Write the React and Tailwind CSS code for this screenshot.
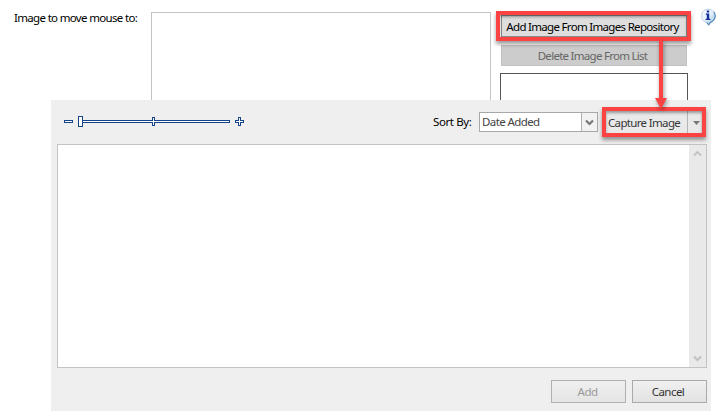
import React from 'react';

function InfoIcon() {
  return (
    <svg width="18" height="20" viewBox="0 0 18 20" className="block">
      <defs>
        <linearGradient id="bubble" x1="0" y1="0" x2="1" y2="1">
          <stop offset="0" stopColor="#ffffff" />
          <stop offset="0.5" stopColor="#e3f0fa" />
          <stop offset="1" stopColor="#8fbce0" />
        </linearGradient>
      </defs>
      <path d="M9 2.2a7 6.8 0 0 1 3.8 12.6l-1.6.7-1.4 2.4-2.2-2.4A7 6.8 0 0 1 9 2.2Z" fill="url(#bubble)" stroke="#b3cbe0" strokeWidth="0.9" />
      <path d="M15 5a7 7 0 0 1-2.2 9.8l-1.6.7-1.4 2.4-2.2-2.4" fill="none" stroke="#4b82b4" strokeWidth="1.1" />
      <path d="M7.8 3.4h2.4v2.2H7.8zM6.8 6.6h3.4v5.2h1.2V13H6.6v-1.2h1.2V7.8h-1z" fill="#16309c" />
    </svg>
  );
}

function ZoomSlider() {
  return (
    <svg width="180" height="12" viewBox="0 0 180 12" shapeRendering="crispEdges" fill="#164488" className="block">
      <path d="M0 4h9v3H0zM18 4h148v3H18zM88 1h3v9h-3zM14 0h5v11h-5zM174 1h3v3h3v3h-3v3h-3V7h-3V4h3z" />
      <path d="M1 5h7v1H1zM19 5h146v1H19zM89 2h1v7h-1zM15 1h3v9h-3zM175 2h1v3h3v1h-3v3h-1V6h-3V5h3z" fill="#ffffff" />
    </svg>
  );
}

function Chevron({ up = false, color, heavy = false }) {
  return (
    <svg width="9" height="7" viewBox="0 0 9 7" className="block">
      <path d={up ? 'M1 5.5 4.5 2 8 5.5' : 'M1 1.5 4.5 5 8 1.5'} fill="none" stroke={color} strokeWidth={heavy ? 2.2 : 1.8} />
    </svg>
  );
}

function Highlight({ className }) {
  return <div className={`pointer-events-none absolute border-4 border-[#fb4343] shadow-[0px_3px_4px_rgba(0,0,0,0.4),inset_0px_2px_3px_rgba(0,0,0,0.35)] ${className}`} />;
}

export default function App() {
  return (
    <div className="relative flex h-[411px] w-[724px] flex-col overflow-hidden bg-white font-['Noto_Sans',sans-serif] text-[11.5px] leading-[16px] whitespace-nowrap text-black">
      <div className="flex h-[100px] shrink-0 overflow-hidden">
        <div className="w-[151px] shrink-0 pt-[10px] pl-[14px] tracking-[-0.67px]">Image to move mouse to:</div>
        <div className="mt-3 h-[100px] w-[340px] shrink-0 border border-[#c3c3c3]" />
        <div className="ml-[9px] flex w-[188px] shrink-0 flex-col pt-[15px]">
          <button className="ml-px flex h-[22px] w-[186px] shrink-0 items-center justify-center border border-[#8c8c8c] bg-[#dedede] pt-px pr-[3px] tracking-[-0.69px]">Add Image From Images Repository</button>
          <button className="mt-2 ml-px flex h-[21px] w-[186px] shrink-0 items-center justify-center border border-[#c1c1c1] bg-[#cccccc] pr-[3px] tracking-[-0.72px] text-[#666666]">Delete Image From List</button>
          <div className="mt-[7px] h-[60px] shrink-0 border border-[#555555]" />
        </div>
        <div className="ml-[11px] pt-[7px]"><InfoIcon /></div>
      </div>

      <div className="ml-[51px] flex h-[311px] w-[660px] shrink-0 flex-col bg-[#efefef] px-1.5">
        <div className="flex h-11 shrink-0">
          <div className="w-[376px] shrink-0 pt-4 pl-[7px]"><ZoomSlider /></div>
          <div className="w-[46px] shrink-0 pt-[14px] tracking-[-0.4px]">Sort By:</div>
          <div className="mt-3 flex h-5 w-[119px] shrink-0 border border-[#a8a8a8] bg-white text-[#444444]">
            <div className="flex flex-1 items-center pl-[2px] tracking-[-0.6px]">Date Added</div>
            <div className="flex w-4 items-center justify-center border-l border-[#b1b1b1] bg-[#f2f2f2]"><Chevron color="#777777" heavy /></div>
          </div>
          <div className="mt-[11px] ml-[7px] flex h-[23px] w-[99px] shrink-0 bg-[#e9e9e9] text-[#373737]">
            <div className="flex flex-1 items-center pl-[3px] tracking-[-0.66px]">Capture Image</div>
            <div className="flex w-[17px] items-center justify-center border-l border-[#b5b5b5]">
              <svg width="7" height="4" viewBox="0 0 7 4"><path d="M0 0h7L3.5 4z" fill="#777777" /></svg>
            </div>
          </div>
        </div>
        <div className="flex h-[224px] w-[650px] shrink-0 justify-end border border-[#c3c3c3] bg-white">
          <div className="flex w-[17px] flex-col items-center justify-between bg-[#e9e9e9] py-[5px]">
            <Chevron up color="#c2c2c2" />
            <Chevron color="#c2c2c2" heavy />
          </div>
        </div>
        <div className="mt-3 flex w-[650px] justify-end gap-1.5 tracking-[-0.55px]">
          <button className="flex h-[23px] w-[75px] items-center justify-center border border-[#b0b0b0] bg-linear-to-b from-[#efefef] to-[#e5e5e5] pr-0.5 text-[#999999]">Add</button>
          <button className="flex h-[23px] w-[75px] items-center justify-center border border-[#aaaaaa] bg-linear-to-b from-[#f0f0f0] to-[#e2e2e2] pr-[3px] text-[#333333]">Cancel</button>
        </div>
      </div>

      <Highlight className="top-[11px] left-[496px] h-[30px] w-[195px]" />
      <Highlight className="top-[107px] left-[602px] h-[30px] w-[104px]" />
      <svg width="20" height="76" viewBox="0 0 20 76" className="pointer-events-none absolute top-[37px] left-[651px] drop-shadow-[1px_2px_2px_rgba(0,0,0,0.4)]">
        <path d="M8 3h4v58h4L10 72 4 61h4z" fill="#fb4343" />
      </svg>
    </div>
  );
}
